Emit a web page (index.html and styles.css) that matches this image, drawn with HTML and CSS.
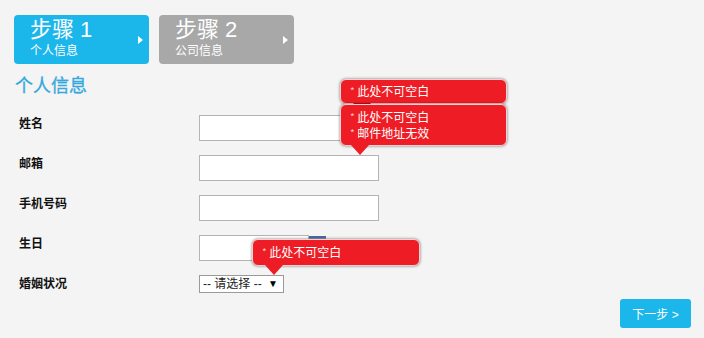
FILE: index.html
```html
<!DOCTYPE html>
<html lang="zh-CN">
<head>
  <meta charset="UTF-8" />
  <title>注册向导</title>
  <link rel="stylesheet" href="styles.css">
</head>
<body>

  <div class="steps">
    <div class="step active">
      <div class="step-title">步骤 1</div>
      <div class="step-sub">个人信息</div>
    </div>
    <div class="step">
      <div class="step-title">步骤 2</div>
      <div class="step-sub">公司信息</div>
    </div>
  </div>

  <h3 class="section-title">个人信息</h3>

  <form class="form">
    <div class="row">
      <label>姓名</label>
      <input type="text" class="field">
    </div>
    <div class="row">
      <label>邮箱</label>
      <input type="text" class="field">
    </div>
    <div class="row">
      <label>手机号码</label>
      <input type="text" class="field">
    </div>
    <div class="row">
      <label>生日</label>
      <div class="date-wrap">
        <input type="text" class="field short">
        <span class="cal"></span>
      </div>
    </div>
    <div class="row">
      <label>婚姻状况</label>
      <div class="select">-- 请选择 --<span class="caret">▼</span></div>
    </div>
  </form>

  <div class="actions">
    <button class="next">下一步 &gt;</button>
  </div>

  <div class="tip tip-name"><span class="star">*</span> 此处不可空白</div>
  <div class="tip tip-mail"><span class="star">*</span> 此处不可空白<br><span class="star">*</span> 邮件地址无效</div>
  <div class="tip tip-date"><span class="star">*</span> 此处不可空白</div>

</body>
</html>
```

FILE: styles.css
```css
* {
  box-sizing: border-box;
}

body {
  margin: 0;
  background: #f4f4f4;
  font-family: "Liberation Sans", "Noto Sans CJK SC", sans-serif;
  color: #111;
  position: relative;
  height: 338px;
  overflow: hidden;
}

.steps {
  display: flex;
  gap: 10px;
  padding: 15px 14px 0;
}

.step {
  position: relative;
  width: 135px;
  height: 49px;
  border-radius: 4px;
  background: #a8a8a8;
  color: #fff;
  padding: 2px 0 0 16px;
}

.step.active {
  background: #1bb6ea;
}

.step::after {
  content: "";
  position: absolute;
  right: 6px;
  top: 21px;
  border-left: 5px solid #fff;
  border-top: 4px solid transparent;
  border-bottom: 4px solid transparent;
}

.step-title {
  font-size: 22px;
  line-height: 26px;
}

.step-sub {
  font-size: 12px;
  line-height: 16px;
}

.section-title {
  margin: 10px 0 0 15px;
  font-size: 18px;
  line-height: 24px;
  font-weight: normal;
  color: #35a9dc;
  -webkit-text-stroke: 0.3px #35a9dc;
}

.form {
  margin-top: 17px;
  padding-left: 19px;
}

.row {
  display: grid;
  grid-template-columns: 180px 1fr;
  height: 26px;
  margin-bottom: 14px;
}

.row label {
  font-size: 12px;
  font-weight: bold;
  line-height: 16px;
  padding-top: 1px;
}

.field {
  width: 180px;
  height: 26px;
  border: 1px solid #b4b4b8;
  background: #fff;
  margin: 0;
  font-size: 12px;
}

.date-wrap {
  display: flex;
  align-items: flex-start;
}

.field.short {
  width: 110px;
}

.cal {
  width: 17px;
  height: 8px;
  margin-top: 1px;
  background: #8a9ab8;
  border-top: 2px solid #4a6aa8;
}

.select {
  width: 85px;
  height: 18px;
  border: 1px solid #9a9a9a;
  background: #fff;
  font-size: 12px;
  line-height: 16px;
  padding-left: 3px;
  color: #222;
  position: relative;
}

.caret {
  position: absolute;
  right: 5px;
  top: 0;
  font-size: 10px;
  color: #000;
}

.actions {
  display: flex;
  justify-content: flex-end;
  padding-right: 13px;
  margin-top: -16px;
}

.next {
  width: 71px;
  height: 29px;
  border: none;
  border-radius: 3px;
  background: #1bb6ea;
  color: #fff;
  font-family: "Liberation Sans", "Noto Sans CJK SC", sans-serif;
  font-size: 12px;
  padding: 0;
}

/* validation tips lie over the form */
.tip {
  position: absolute;
  width: 167px;
  background: #ee1c24;
  color: #fff;
  font-family: "Noto Sans CJK SC", sans-serif;
  font-size: 12px;
  line-height: 16px;
  border: 1px solid #f6d0d0;
  border-radius: 6px;
  box-shadow: 0 0 3px rgba(0, 0, 0, 0.55);
  padding: 4px 9px;
}

.tip::after {
  content: "";
  position: absolute;
  left: 12px;
  bottom: -10px;
  border-top: 10px solid #ee1c24;
  border-left: 9px solid transparent;
  border-right: 9px solid transparent;
}

.tip .star {
  font-size: 10px;
  color: #f8c8c8;
  vertical-align: top;
}

.tip-name {
  left: 340px;
  top: 79px;
  height: 25px;
  padding-top: 3px;
  z-index: 1;
}

.tip-name::after {
  border-top-color: #c8141a;
}

.tip-mail {
  left: 340px;
  top: 104px;
  height: 42px;
  padding-top: 4px;
  z-index: 2;
}

.tip-mail::after {
  left: 10px;
}

.tip-date {
  left: 252px;
  top: 239px;
  height: 27px;
  width: 168px;
  padding-top: 4px;
  z-index: 2;
}

.tip-date::after {
  left: 12px;
}
```
